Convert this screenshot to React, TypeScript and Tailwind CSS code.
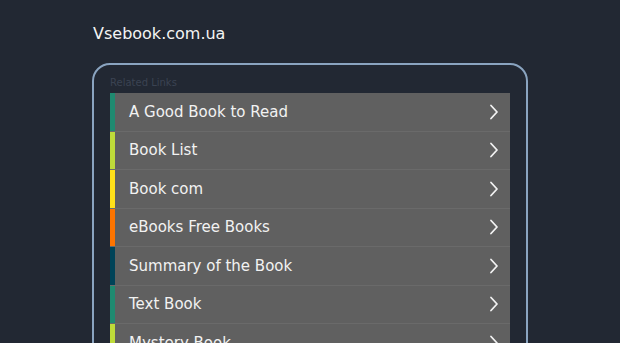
const LINKS = [
  { label: "A Good Book to Read", color: "bg-[#1f8a70]" },
  { label: "Book List", color: "bg-[#bedb39]" },
  { label: "Book com", color: "bg-[#ffe11a]" },
  { label: "eBooks Free Books", color: "bg-[#fd7400]" },
  { label: "Summary of the Book", color: "bg-[#004358]" },
  { label: "Text Book", color: "bg-[#1f8a70]" },
  { label: "Mystery Book", color: "bg-[#bedb39]" },
  { label: "Read Books Online", color: "bg-[#ffe11a]" },
]

function Chevron() {
  return (
    <svg width="10" height="16" viewBox="0 0 10 16" fill="none" className="shrink-0">
      <path d="M2 1.5 L8 8 L2 14.5" stroke="#f2f2f2" strokeWidth="1.8" strokeLinecap="round" strokeLinejoin="round" />
    </svg>
  )
}

export default function App() {
  return (
    <div className="min-h-[343px] bg-[#222833] font-['DejaVu_Sans',sans-serif] overflow-hidden">
      <div className="w-[436px] mx-auto pt-[22px]">
        <h1 className="text-[16px] leading-[24px] text-[#f4f4f4] pl-[1px] font-medium">Vsebook.com.ua</h1>

        <div className="mt-[17px] border-2 border-[#8aa4c0] rounded-[18px] px-[16px] pt-[11px] pb-6">
          <div className="text-[10px] leading-[14px] text-[#3b4352] pl-[-1px] mb-[3px]">Related Links</div>
          <ul>
            {LINKS.map((l) => (
              <li key={l.label} className="flex h-[38.5px] bg-[#606060] border-b border-[#6a6a6a]">
                <div className={`w-[5px] shrink-0 ${l.color}`} />
                <div className="flex-1 flex items-center justify-between pl-[14px] pr-[11px]">
                  <span className="text-[15px] text-[#f2f2f2]">{l.label}</span>
                  <Chevron />
                </div>
              </li>
            ))}
          </ul>
        </div>
      </div>
    </div>
  )
}
